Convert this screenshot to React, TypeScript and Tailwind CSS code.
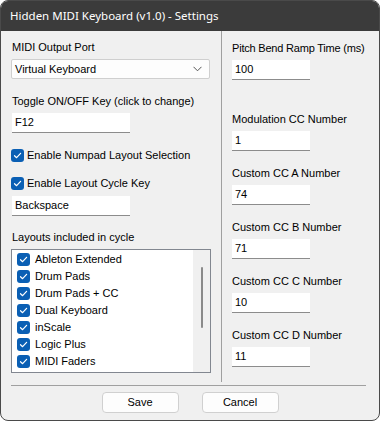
import React from 'react';

const ui = { fontFamily: '"Liberation Sans", Arial, sans-serif' };
const title = { fontFamily: '"Noto Sans", "Open Sans", sans-serif' };

const layouts = ['Ableton Extended', 'Drum Pads', 'Drum Pads + CC', 'Dual Keyboard', 'inScale', 'Logic Plus', 'MIDI Faders'];

const ccFields = [
  { label: 'Custom CC A Number', value: '74' },
  { label: 'Custom CC B Number', value: '71' },
  { label: 'Custom CC C Number', value: '10' },
  { label: 'Custom CC D Number', value: '11' },
];

const Check: React.FC = () => (
  <span className="w-[13px] h-[13px] rounded-[3px] bg-[#0a5fb4] flex items-center justify-center shrink-0">
    <svg width="9" height="9" viewBox="0 0 9 9" fill="none">
      <path d="M1.5 4.7 L3.6 6.7 L7.6 2.3" stroke="white" strokeWidth="1.2" strokeLinecap="round" strokeLinejoin="round" />
    </svg>
  </span>
);

const Label: React.FC<{ text: string; className?: string }> = ({ text, className = '' }) => (
  <div className={`h-[13px] leading-[13px] text-[11px] text-black whitespace-nowrap ${className}`}>{text}</div>
);

const TextBox: React.FC<{ value: string; className?: string }> = ({ value, className = '' }) => (
  <div className={`h-[20px] w-[78px] bg-white border-b border-[#8c8c8c] pl-[3px] flex items-center text-[11px] text-black ${className}`}>
    {value}
  </div>
);

export default function App() {
  return (
    <div className="w-[380px] h-[421px] bg-white" style={ui}>
      <div className="w-full h-full rounded-[8px] border border-[#4a4a4a] overflow-hidden bg-[#f0f0f0] flex flex-col">
        {/* Title bar */}
        <div className="h-[30px] shrink-0 bg-[#3b3b3b] text-white text-[11.5px] pl-[9px] flex items-center" style={title}>
          Hidden MIDI Keyboard (v1.0) - Settings
        </div>

        {/* Body */}
        <div className="flex h-[351px]">
          {/* Left column */}
          <div className="w-[200px] ml-[10px] pt-[10px]">
            <Label text="MIDI Output Port" className="pl-[1px]" />
            <div className="mt-[5px] h-[20px] w-[199px] bg-[#fdfdfd] border border-[#cfcfcf] rounded-[2px] flex items-center justify-between pl-[3px] pr-[7px] text-[11px]">
              <span>Virtual Keyboard</span>
              <svg width="9" height="6" viewBox="0 0 9 6" fill="none">
                <path d="M0.5 0.8 L4.5 4.8 L8.5 0.8" stroke="#555" strokeWidth="1" />
              </svg>
            </div>

            <Label text="Toggle ON/OFF Key (click to change)" className="mt-[16px] pl-[1px]" />
            <TextBox value="F12" className="mt-[5px] ml-[1px] w-[118px]" />

            <div className="mt-[16px] h-[13px] flex items-center gap-[3px] text-[11px]">
              <Check />
              <span>Enable Numpad Layout Selection</span>
            </div>
            <div className="mt-[15px] h-[13px] flex items-center gap-[3px] text-[11px]">
              <Check />
              <span>Enable Layout Cycle Key</span>
            </div>
            <TextBox value="Backspace" className="mt-[6px] ml-[1px] w-[118px]" />

            <Label text="Layouts included in cycle" className="mt-[15px] pl-[1px]" />
            <div className="mt-[5px] h-[124px] w-[200px] bg-white border border-[#828790] flex">
              <div className="flex-1 pt-[1px] pl-[5px]">
                {layouts.map((name) => (
                  <div key={name} className="h-[17px] flex items-center gap-[5px] text-[11px]">
                    <Check />
                    <span>{name}</span>
                  </div>
                ))}
              </div>
              <div className="w-[17px] bg-[#f0f0f0] pt-[17px] flex justify-center">
                <div className="w-[2px] h-[61px] bg-[#8a8a8a] rounded-full" />
              </div>
            </div>
          </div>

          {/* Divider */}
          <div className="w-[1px] ml-[10px] bg-[#a0a0a0]" />

          {/* Right column */}
          <div className="ml-[10px] pt-[11px]">
            <Label text="Pitch Bend Ramp Time (ms)" className="tracking-[-0.2px]" />
            <TextBox value="100" className="mt-[5px]" />
            <Label text="Modulation CC Number" className="mt-[33px]" />
            <TextBox value="1" className="mt-[5px]" />
            {ccFields.map((f) => (
              <div key={f.label}>
                <Label text={f.label} className="mt-[16px]" />
                <TextBox value={f.value} className="mt-[5px]" />
              </div>
            ))}
          </div>
        </div>

        {/* Separator */}
        <div className="mx-[10px] mt-[3px] w-[355px] h-[1px] bg-[#a0a0a0]" />

        {/* Buttons */}
        <div className="mt-[6px] flex justify-center gap-[23px]">
          <button className="w-[77px] h-[21px] bg-[#fdfdfd] border border-[#d0d0d0] rounded-[4px] text-[11px] text-black">Save</button>
          <button className="w-[77px] h-[21px] bg-[#fdfdfd] border border-[#d0d0d0] rounded-[4px] text-[11px] text-black">Cancel</button>
        </div>
      </div>
    </div>
  );
}
